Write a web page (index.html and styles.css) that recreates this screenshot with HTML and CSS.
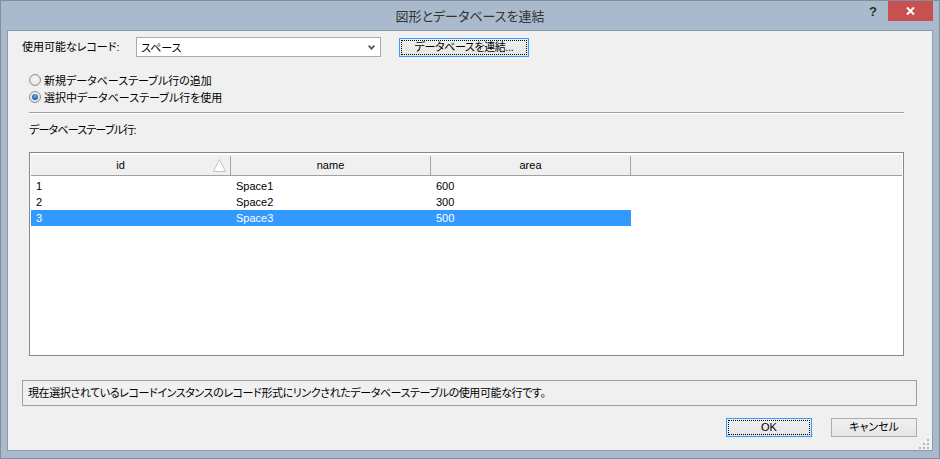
FILE: index.html
```html
<!DOCTYPE html>
<html lang="ja">
<head>
<meta charset="utf-8">
<title>図形とデータベースを連結</title>
<link rel="stylesheet" href="styles.css">
</head>
<body>
<div class="window">
  <header class="titlebar">
    <div></div>
    <div class="title">図形とデータベースを連結</div>
    <div class="caption">
      <span class="help">?</span>
      <span class="close"><svg width="9" height="8" viewBox="0 0 9 8"><path d="M1 0.5 L8 7.5 M8 0.5 L1 7.5" stroke="#fff" stroke-width="2"/></svg></span>
    </div>
  </header>
  <main class="client">
    <div class="record-row">
      <span class="lbl">使用可能なレコード:</span>
      <div class="combo"><span class="combo-text">スペース</span><svg class="chev" width="7" height="5" viewBox="0 0 7 5"><path d="M0.6 0.6 L3.5 3.6 L6.4 0.6" fill="none" stroke="#555" stroke-width="1.8"/></svg></div>
      <button class="btn default connect">データベースを連結...</button>
    </div>
    <div class="radios">
      <div class="radio-row"><span class="radio"></span><span class="radio-text">新規データベーステーブル行の追加</span></div>
      <div class="radio-row"><span class="radio checked"></span><span class="radio-text">選択中データベーステーブル行を使用</span></div>
    </div>
    <div class="sep"></div>
    <div class="grid-label">データベーステーブル行:</div>
    <div class="grid">
      <div class="grid-head">
        <div class="hcell sorted">id<svg class="sort" width="15" height="15" viewBox="0 0 15 15"><path d="M7.5 1.5 L13.5 13.5 L1.5 13.5 Z" fill="#fff" stroke="#c4c4c4" stroke-width="1"/></svg></div>
        <div class="hcell">name</div>
        <div class="hcell">area</div>
        <div class="hfill"></div>
      </div>
      <div class="grid-body">
        <div class="grow"><div class="cell">1</div><div class="cell">Space1</div><div class="cell">600</div></div>
        <div class="grow"><div class="cell">2</div><div class="cell">Space2</div><div class="cell">300</div></div>
        <div class="grow selected"><div class="cell">3</div><div class="cell">Space3</div><div class="cell">500</div></div>
      </div>
    </div>
    <div class="desc">現在選択されているレコードインスタンスのレコード形式にリンクされたデータベーステーブルの使用可能な行です。</div>
    <div class="footer">
      <button class="btn default">OK</button>
      <button class="btn">キャンセル</button>
    </div>
    <svg class="grip" width="10" height="10" viewBox="0 0 10 10"><g fill="#b8b8b8"><rect x="8" y="0" width="2" height="2"/><rect x="4" y="4" width="2" height="2"/><rect x="8" y="4" width="2" height="2"/><rect x="0" y="8" width="2" height="2"/><rect x="4" y="8" width="2" height="2"/><rect x="8" y="8" width="2" height="2"/></g></svg>
  </main>
</div>
</body>
</html>
```

FILE: styles.css
```css
html, body {
  margin: 0;
  padding: 0;
  background: #ffffff;
}
body {
  font-family: "Liberation Sans", "Noto Sans CJK JP", sans-serif;
  font-size: 11px;
  color: #000;
  font-feature-settings: "palt";
}
.window {
  width: 940px;
  height: 459px;
  box-sizing: border-box;
  border: 1px solid #7f8f9f;
  background: #a8bacb;
  padding: 0 6px 7px 6px;
  display: flex;
  flex-direction: column;
}
.titlebar {
  height: 29px;
  flex: none;
  display: grid;
  grid-template-columns: 1fr auto 1fr;
}
.title {
  font-family: "Noto Sans CJK JP", sans-serif;
  font-size: 13px;
  line-height: 29px;
  color: #333333;
}
.caption {
  display: flex;
  justify-content: flex-end;
  align-items: flex-start;
}
.help {
  font-family: "Liberation Sans", sans-serif;
  font-weight: bold;
  font-size: 13px;
  line-height: 16px;
  color: #2b2b2b;
  margin-top: 3px;
  margin-right: 11px;
}
.close {
  width: 45px;
  height: 20px;
  background: #c75050;
  display: flex;
  align-items: center;
  justify-content: center;
}
.client {
  flex: 1;
  position: relative;
  background: #f0f0f0;
  border: 1px solid #8d9cab;
  padding: 6px 15px 0 14px;
  display: flex;
  flex-direction: column;
}
.record-row {
  display: flex;
  align-items: flex-start;
  height: 20px;
}
.lbl {
  width: 114px;
  line-height: 20px;
}
.combo {
  width: 245px;
  height: 20px;
  box-sizing: border-box;
  border: 1px solid #ababab;
  background: #fff;
  display: flex;
  align-items: center;
  padding-left: 4px;
}
.chev {
  margin-left: auto;
  margin-right: 5px;
}
.btn {
  font: inherit;
  font-family: "Liberation Sans", "Noto Sans CJK JP", sans-serif;
  font-size: 11px;
  color: #000;
  box-sizing: border-box;
  height: 19px;
  width: 86px;
  padding: 0;
  border: 1px solid #acacac;
  background: linear-gradient(#f0f0f0, #e5e5e5);
  line-height: 17px;
}
.btn.default {
  border-color: #3399ff;
  outline: 1px dotted #000;
  outline-offset: -3px;
}
.connect {
  width: 130px;
  margin-left: 18px;
  margin-top: 1px;
  letter-spacing: -0.4px;
}
.radios {
  margin: 14px 0 0 7px;
}
.radio-row {
  height: 17px;
  display: flex;
  align-items: center;
}
.radio {
  width: 12px;
  height: 12px;
  box-sizing: border-box;
  border-radius: 50%;
  border: 1px solid #8e8f8f;
  background: radial-gradient(circle at 50% 40%, #fafafa 0%, #e2e2e2 70%, #d4d4d4 100%);
  display: flex;
  align-items: center;
  justify-content: center;
  margin-right: 3px;
}
.radio.checked::after {
  content: "";
  width: 6px;
  height: 6px;
  border-radius: 50%;
  background: radial-gradient(circle at 50% 35%, #6bb6f0 0%, #2a7bc8 45%, #0f3f75 100%);
}
.sep {
  margin: 7px 13px 0 7px;
  height: 0;
  border-top: 1px solid #a0a0a0;
  border-bottom: 1px solid #ffffff;
}
.grid-label {
  margin: 8px 0 0 7px;
  line-height: 16px;
  letter-spacing: -0.8px;
}
.grid {
  margin: 14px 13px 0 7px;
  height: 204px;
  box-sizing: border-box;
  border: 1px solid #828790;
  background: #fff;
  padding: 2px 1px 1px 1px;
}
.grid-head {
  height: 20px;
  background: #f0f0f0;
  border-bottom: 1px solid #a0a0a0;
  display: flex;
}
.hcell {
  width: 200px;
  flex: none;
  box-sizing: border-box;
  margin-top: 1px;
  height: 19px;
  border-right: 1px solid #a5a5a5;
  text-align: center;
  line-height: 18px;
  position: relative;
}
.hcell.sorted {
  padding-right: 20px;
}
.sort {
  position: absolute;
  right: 3px;
  top: 2px;
}
.hfill {
  flex: 1;
}
.grid-body {
  margin-top: 2px;
}
.grow {
  display: flex;
  width: 600px;
  height: 16px;
}
.cell {
  width: 200px;
  box-sizing: border-box;
  padding-left: 5px;
  line-height: 16px;
}
.grow.selected {
  background: #3399ff;
  color: #fff;
}
.desc {
  margin-top: 24px;
  height: 26px;
  box-sizing: border-box;
  border: 1px solid #a0a0a0;
  padding-left: 5px;
  line-height: 24px;
  letter-spacing: -0.4px;
}
.footer {
  margin-top: 12px;
  display: flex;
  justify-content: flex-end;
  gap: 19px;
}
.grip {
  position: absolute;
  right: 3px;
  bottom: 1px;
}
```
